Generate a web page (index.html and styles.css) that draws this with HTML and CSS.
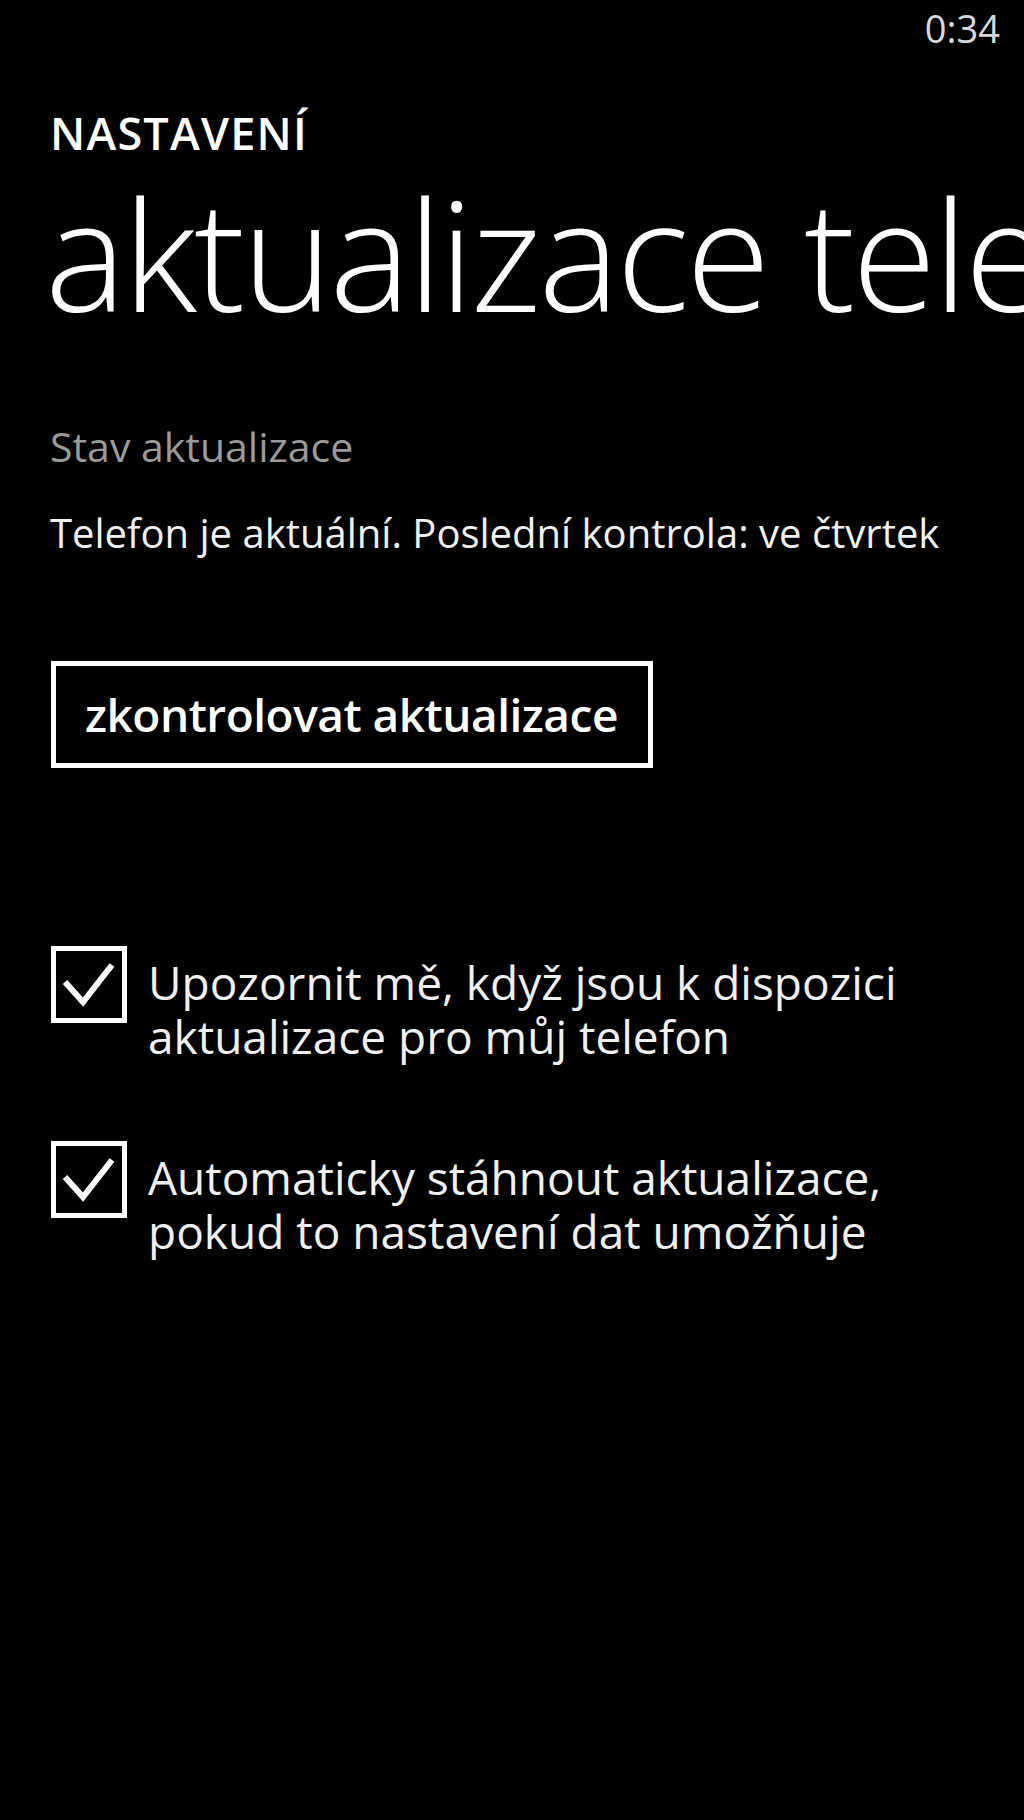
FILE: index.html
```html
<!DOCTYPE html>
<html lang="cs">
<head>
<meta charset="utf-8">
<title>aktualizace telefonu</title>
<link rel="stylesheet" href="styles.css">
</head>
<body>
<div class="screen">
  <div class="status">0:34</div>
  <div class="app-title">NASTAVENÍ</div>
  <div class="page-title">aktualizace telefonu</div>
  <div class="label">Stav aktualizace</div>
  <div class="status-text">Telefon je aktuální. Poslední kontrola: ve čtvrtek</div>
  <div class="button-row"><button class="btn">zkontrolovat aktualizace</button></div>
  <div class="check-row first">
    <div class="box"><svg viewBox="0 0 66 67" width="66" height="67"><polyline points="9,31 27,51 56,14" fill="none" stroke="#fff" stroke-width="6"/></svg></div>
    <div class="check-text">Upozornit mě, když jsou k dispozici<br>aktualizace pro můj telefon</div>
  </div>
  <div class="check-row second">
    <div class="box"><svg viewBox="0 0 66 67" width="66" height="67"><polyline points="9,31 27,51 56,14" fill="none" stroke="#fff" stroke-width="6"/></svg></div>
    <div class="check-text">Automaticky stáhnout aktualizace,<br>pokud to nastavení dat umožňuje</div>
  </div>
</div>
</body>
</html>
```
FILE: styles.css
```css
html, body {
  margin: 0;
  padding: 0;
  background: #000;
}
body {
  font-family: "Open Sans", "Noto Sans", sans-serif;
  color: #fff;
}
.screen {
  width: 1024px;
  height: 1820px;
  overflow: hidden;
  background: #000;
}
.status {
  padding-top: 9px;
  padding-right: 24px;
  font-size: 38px;
  line-height: 38px;
  text-align: right;
  color: #d8d8d8;
}
.app-title {
  margin-top: 63px;
  padding-left: 50px;
  font-size: 45px;
  line-height: 45px;
  font-weight: 600;
  letter-spacing: 1.2px;
}
.page-title {
  margin-top: 21px;
  padding-left: 45px;
  font-size: 153px;
  line-height: 153px;
  font-weight: 300;
  letter-spacing: -3px;
  white-space: nowrap;
  overflow: hidden;
}
.label {
  margin-top: 97px;
  padding-left: 50px;
  font-size: 41px;
  line-height: 41px;
  color: #9a9a9a;
}
.status-text {
  margin-top: 46px;
  padding-left: 50px;
  font-size: 40px;
  line-height: 40px;
  color: #f0f0f0;
}
.button-row {
  margin-top: 108px;
  padding-left: 51px;
}
.btn {
  display: inline-block;
  margin: 0;
  padding: 0 30px 0 29px;
  height: 107px;
  border: 5px solid #fff;
  background: #000;
  color: #fff;
  font-family: "Open Sans", "Noto Sans", sans-serif;
  font-size: 46px;
  line-height: 97px;
  font-weight: 600;
  letter-spacing: -0.5px;
}
.check-row {
  display: flex;
  align-items: flex-start;
  gap: 21px;
  padding-left: 51px;
}
.check-row.first {
  margin-top: 178px;
}
.check-row.second {
  margin-top: 78px;
}
.box {
  flex: none;
  width: 66px;
  height: 67px;
  border: 5px solid #fff;
}
.box svg {
  display: block;
}
.check-text {
  padding-top: 9px;
  font-size: 46px;
  line-height: 54px;
  color: #f0f0f0;
}
```
